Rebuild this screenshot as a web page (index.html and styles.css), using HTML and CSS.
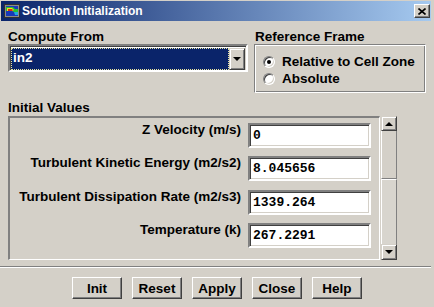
FILE: index.html
```html
<!DOCTYPE html>
<html lang="en">
<head>
  <meta charset="UTF-8" />
  <title>Solution Initialization</title>
  <link rel="stylesheet" href="styles.css">
</head>
<body>
  <div class="window">
    <div class="titlebar">
      <svg class="app-icon" viewBox="0 0 16 14">
        <rect width="16" height="14" fill="#303030"/>
        <rect x="1" y="1" width="14" height="12" fill="#8a8a8a"/>
        <rect x="2" y="2" width="12" height="10" fill="#1838b8"/>
        <path d="M2 3h7l2 2h3v3h-4l-2-1H2z" fill="#28c030"/>
        <path d="M3 4h5l2 2-2 1H3z" fill="#f0e020"/>
        <path d="M4 5h4l1 1-1 1H4z" fill="#e02818"/>
        <path d="M10 8h4v3h-3z" fill="#20a8e0"/>
      </svg>
      <span class="title">Solution Initialization</span>
      <button class="close-btn">
        <svg viewBox="0 0 8 7" width="8" height="7">
          <path d="M0.5 0.5L7.5 6.5M7.5 0.5L0.5 6.5" stroke="#000" stroke-width="1.6"/>
        </svg>
      </button>
    </div>

    <div class="content">
      <div class="top-row">
        <div class="compute">
          <div class="label">Compute From</div>
          <div class="combo">
            <div class="combo-value">in2</div>
            <div class="combo-btn"><span class="arrow-down"></span></div>
          </div>
        </div>
        <div class="frame">
          <div class="label frame-label">Reference Frame</div>
          <div class="groupbox">
            <div class="radio-row"><span class="radio checked"></span>Relative to Cell Zone</div>
            <div class="radio-row"><span class="radio"></span>Absolute</div>
          </div>
        </div>
      </div>

      <div class="label section-label">Initial Values</div>
      <div class="values">
        <div class="panel">
          <div class="row">
            <span class="row-label">Z Velocity (m/s)</span>
            <div class="field">0</div>
          </div>
          <div class="row">
            <span class="row-label">Turbulent Kinetic Energy (m2/s2)</span>
            <div class="field">8.045656</div>
          </div>
          <div class="row">
            <span class="row-label">Turbulent Dissipation Rate (m2/s3)</span>
            <div class="field">1339.264</div>
          </div>
          <div class="row">
            <span class="row-label">Temperature (k)</span>
            <div class="field">267.2291</div>
          </div>
        </div>
        <div class="scrollbar">
          <div class="scroll-btn"><span class="arrow-up"></span></div>
          <div class="scroll-thumb"></div>
          <div class="scroll-track"></div>
          <div class="scroll-btn down"><span class="arrow-down"></span></div>
        </div>
      </div>
    </div>

    <div class="separator"></div>

    <div class="buttons">
      <button class="btn">Init</button>
      <button class="btn">Reset</button>
      <button class="btn">Apply</button>
      <button class="btn">Close</button>
      <button class="btn">Help</button>
    </div>
  </div>
</body>
</html>
```

FILE: styles.css
```css
body {
  margin: 0;
  background: #d4d0c8;
  font-family: "Liberation Sans", Arial, sans-serif;
  font-weight: bold;
  font-size: 13.5px;
  color: #000;
}

.window {
  width: 434px;
  height: 307px;
  padding-top: 1px;
  box-sizing: border-box;
  overflow: hidden;
}

.titlebar {
  height: 20px;
  margin: 0 3px 0 1px;
  background: linear-gradient(to right, #0a246a, #a6caf0);
  display: flex;
  align-items: center;
}

.app-icon {
  width: 16px;
  height: 14px;
  margin-left: 3px;
}

.title {
  margin-left: 2px;
  color: #fff;
  font-size: 12px;
}

.close-btn {
  margin-left: auto;
  margin-right: 1px;
  width: 16px;
  height: 14px;
  padding: 0;
  background: #d4d0c8;
  border: 1px solid;
  border-color: #fff #404040 #404040 #fff;
  box-shadow: inset -1px -1px #808080;
  display: flex;
  align-items: center;
  justify-content: center;
}

.content {
  padding: 9px 0 0 8px;
}

.top-row {
  display: flex;
  gap: 6px;
}

.label {
  line-height: 14px;
  height: 14px;
}

.compute {
  width: 240px;
}

.combo {
  height: 28px;
  box-sizing: border-box;
  border: 2px solid;
  border-color: #808080 #fff #fff #808080;
  box-shadow: inset 1px 1px #404040, inset -1px -1px #d4d0c8;
  background: #fff;
  padding: 2px 1px 0 1px;
  display: flex;
}

.combo-value {
  flex: 1;
  height: 22px;
  box-sizing: border-box;
  background: #0a246a;
  color: #fff;
  border: 1px dotted #e8e4a0;
  padding-left: 1px;
  line-height: 18px;
}

.combo-btn {
  width: 16px;
  height: 22px;
  box-sizing: border-box;
  background: #d4d0c8;
  border: 1px solid;
  border-color: #d4d0c8 #404040 #404040 #d4d0c8;
  box-shadow: inset 1px 1px #fff, inset -1px -1px #808080;
  display: flex;
  align-items: center;
  justify-content: center;
}

.arrow-down {
  width: 0;
  height: 0;
  border-left: 4px solid transparent;
  border-right: 4px solid transparent;
  border-top: 4px solid #000;
}

.arrow-up {
  width: 0;
  height: 0;
  border-left: 4px solid transparent;
  border-right: 4px solid transparent;
  border-bottom: 4px solid #000;
}

.frame {
  width: 172px;
}

.frame-label {
  padding-left: 1px;
}

.groupbox {
  height: 49px;
  box-sizing: border-box;
  border: 1px solid;
  border-color: #808080 #fff #fff #808080;
  box-shadow: inset 1px 1px #fff, inset -1px -1px #808080;
  padding: 8px 0 0 8px;
}

.radio-row {
  display: flex;
  align-items: center;
  height: 17px;
  line-height: 17px;
}

.radio {
  width: 12px;
  height: 12px;
  box-sizing: border-box;
  border-radius: 50%;
  margin-right: 7px;
  background: #fff;
  border: 1px solid;
  border-color: #808080 #fff #fff #808080;
  box-shadow: inset 1px 1px #404040, inset -1px -1px #d4d0c8;
  display: flex;
  align-items: center;
  justify-content: center;
}

.radio.checked::after {
  content: "";
  width: 4px;
  height: 4px;
  border-radius: 50%;
  background: #000;
}

.section-label {
  margin-top: 8px;
  margin-bottom: 1px;
}

.values {
  display: flex;
  gap: 1px;
  height: 144px;
}

.panel {
  width: 372px;
  box-sizing: border-box;
  border-style: solid;
  border-width: 2px 1px 1px 2px;
  border-color: #808080 #fff #fff #808080;
  padding: 5px 8px 0 0;
  display: flex;
  flex-direction: column;
  gap: 8.33px;
}

.row {
  display: flex;
  justify-content: flex-end;
  gap: 7px;
  height: 25px;
}

.row-label {
  line-height: 14px;
}

.field {
  width: 123px;
  height: 25px;
  box-sizing: border-box;
  border: 2px solid;
  border-color: #808080 #fff #fff #808080;
  box-shadow: inset 1px 1px #404040, inset -1px -1px #d4d0c8;
  background: #fff;
  font-family: "Liberation Mono", "Courier New", monospace;
  font-size: 13px;
  padding-left: 3px;
  line-height: 21px;
}

.scrollbar {
  width: 16px;
  display: flex;
  flex-direction: column;
}

.scroll-btn {
  height: 15px;
  box-sizing: border-box;
  background: #d4d0c8;
  border: 1px solid;
  border-color: #d4d0c8 #404040 #404040 #d4d0c8;
  box-shadow: inset 1px 1px #fff, inset -1px -1px #808080;
  display: flex;
  align-items: center;
  justify-content: center;
}

.scroll-btn.down {
  height: 16px;
}

.scroll-thumb {
  height: 48px;
  box-sizing: border-box;
  border-left: 1px solid #fff;
  border-right: 1px solid #808080;
  border-bottom: 1px solid #808080;
}

.scroll-track {
  flex: 1;
  box-sizing: border-box;
  border-left: 1px solid #fff;
  border-right: 1px solid #808080;
  border-top: 1px solid #fff;
  background: #d8d5ce;
}

.separator {
  margin: 6px 3px 0 0;
  border-top: 1px solid #808080;
  border-bottom: 1px solid #fff;
}

.buttons {
  display: flex;
  justify-content: center;
  gap: 10px;
  margin-top: 9px;
}

.btn {
  width: 50px;
  height: 22px;
  padding: 0;
  background: #d4d0c8;
  border: 1px solid;
  border-color: #fff #404040 #404040 #fff;
  box-shadow: inset -1px -1px #808080;
  font-family: "Liberation Sans", Arial, sans-serif;
  font-weight: bold;
  font-size: 13.5px;
  color: #000;
}
```
